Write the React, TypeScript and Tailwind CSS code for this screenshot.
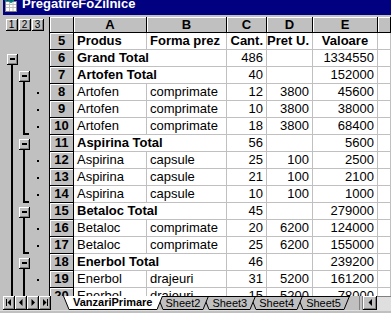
import React from 'react';

type Kind = 'head' | 'total' | 'data';
type Row = { n: number; kind: Kind; a: string; b?: string; c?: string; d?: string; e?: string };

const rows: Row[] = [
  { n: 5, kind: 'head', a: 'Produs', b: 'Forma prez', c: 'Cant.', d: 'Pret U.', e: 'Valoare' },
  { n: 6, kind: 'total', a: 'Grand Total', c: '486', e: '1334550' },
  { n: 7, kind: 'total', a: 'Artofen Total', c: '40', e: '152000' },
  { n: 8, kind: 'data', a: 'Artofen', b: 'comprimate', c: '12', d: '3800', e: '45600' },
  { n: 9, kind: 'data', a: 'Artofen', b: 'comprimate', c: '10', d: '3800', e: '38000' },
  { n: 10, kind: 'data', a: 'Artofen', b: 'comprimate', c: '18', d: '3800', e: '68400' },
  { n: 11, kind: 'total', a: 'Aspirina Total', c: '56', e: '5600' },
  { n: 12, kind: 'data', a: 'Aspirina', b: 'capsule', c: '25', d: '100', e: '2500' },
  { n: 13, kind: 'data', a: 'Aspirina', b: 'capsule', c: '21', d: '100', e: '2100' },
  { n: 14, kind: 'data', a: 'Aspirina', b: 'capsule', c: '10', d: '100', e: '1000' },
  { n: 15, kind: 'total', a: 'Betaloc Total', c: '45', e: '279000' },
  { n: 16, kind: 'data', a: 'Betaloc', b: 'comprimate', c: '20', d: '6200', e: '124000' },
  { n: 17, kind: 'data', a: 'Betaloc', b: 'comprimate', c: '25', d: '6200', e: '155000' },
  { n: 18, kind: 'total', a: 'Enerbol Total', c: '46', e: '239200' },
  { n: 19, kind: 'data', a: 'Enerbol', b: 'drajeuri', c: '31', d: '5200', e: '161200' },
  { n: 20, kind: 'data', a: 'Enerbol', b: 'drajeuri', c: '15', d: '5200', e: '78000' },
];

const ROW = 17;

// raised outline "-" button, drawn at row index i
function MinusBox({ x, i }: { x: number; i: number }) {
  const y = i * ROW + 4;
  return (
    <g>
      <rect x={x} y={y} width={11} height={11} fill="#c0c0c0" />
      <rect x={x} y={y} width={10} height={1} fill="#fff" />
      <rect x={x} y={y} width={1} height={10} fill="#fff" />
      <rect x={x} y={y + 10} width={11} height={1} fill="#000" />
      <rect x={x + 10} y={y} width={1} height={11} fill="#000" />
      <rect x={x + 1} y={y + 9} width={9} height={1} fill="#808080" />
      <rect x={x + 9} y={y + 1} width={1} height={9} fill="#808080" />
      <rect x={x + 3} y={y + 4} width={5} height={2} fill="#000" />
    </g>
  );
}

function Bracket({ from, to, hook }: { from: number; to: number; hook: boolean }) {
  const y0 = from * ROW + 15;
  const y1 = hook ? to * ROW + 17 : 263;
  return (
    <g fill="#000">
      <rect x={20} y={y0} width={2} height={y1 - y0} />
      {hook && <rect x={20} y={to * ROW + 15} width={6} height={2} />}
    </g>
  );
}

function OutlineGutter() {
  const dots = [3, 4, 5, 7, 8, 9, 11, 12, 14, 15];
  return (
    <svg width={46} height={263} className="shrink-0">
      <rect x={8} y={ROW + 15} width={2} height={263} fill="#000" />
      <MinusBox x={4} i={1} />
      <Bracket from={2} to={5} hook />
      <Bracket from={6} to={9} hook />
      <Bracket from={10} to={12} hook />
      <Bracket from={13} to={15} hook={false} />
      {[2, 6, 10, 13].map((i) => (
        <MinusBox key={i} x={16} i={i} />
      ))}
      {dots.map((i) => (
        <rect key={i} x={34} y={i * ROW + 8} width={2} height={2} fill="#000" />
      ))}
    </svg>
  );
}

function SheetRow({ r }: { r: Row }) {
  const cell = 'h-[17px] shrink-0 border-r border-b border-[#c0c0c0] bg-white px-[3px] flex items-center whitespace-nowrap overflow-hidden';
  const num = 'justify-end';
  const head = r.kind === 'head' ? 'font-bold' : '';
  return (
    <div className={`flex h-[17px] text-[13px] leading-[16px] text-black ${head}`}>
      <div className="w-[25px] h-[17px] shrink-0 border-l border-r border-b border-black bg-[#c0c0c0] shadow-[inset_1px_1px_0_#fff] flex items-center justify-center font-bold">
        {r.n}
      </div>
      {r.kind === 'total' ? (
        <div className={`${cell} w-[153px] font-bold`}>{r.a}</div>
      ) : (
        <>
          <div className={`${cell} w-[73px]`}>{r.a}</div>
          <div className={`${cell} w-[80px]`}>{r.b}</div>
        </>
      )}
      <div className={`${cell} w-[40px] ${num}`}>{r.c}</div>
      <div className={`${cell} w-[46px] ${num}`}>{r.d}</div>
      <div className={`${cell} w-[65px] ${r.kind === 'head' ? 'justify-center' : num}`}>{r.e}</div>
      <div className={`${cell} flex-1`} />
    </div>
  );
}

function ColHead({ label, w }: { label: string; w: string }) {
  return (
    <div className={`${w} h-[16px] shrink-0 bg-[#c0c0c0] border-r border-b border-black shadow-[inset_1px_1px_0_#fff] flex items-center justify-center text-[13px] font-bold leading-none`}>
      {label}
    </div>
  );
}

function LevelButton({ n }: { n: number }) {
  return (
    <div className="w-[12px] h-[12px] bg-[#c0c0c0] border-r border-b border-black shadow-[inset_1px_1px_0_#fff,inset_-1px_-1px_0_#808080] flex items-center justify-center text-[10px] leading-none">
      {n}
    </div>
  );
}

function NavButton({ dir }: { dir: 'first' | 'prev' | 'next' | 'last' }) {
  return (
    <div className="w-[12px] h-[14px] shrink-0 bg-[#c0c0c0] border-r border-b border-black shadow-[inset_1px_1px_0_#fff,inset_-1px_-1px_0_#808080] flex items-center justify-center">
      <svg width={8} height={7} fill="#000">
        {dir === 'first' && (
          <>
            <rect x={1} y={0} width={1} height={7} />
            <polygon points="6,0 6,7 2.5,3.5" />
          </>
        )}
        {dir === 'prev' && <polygon points="5.5,0 5.5,7 2,3.5" />}
        {dir === 'next' && <polygon points="2.5,0 2.5,7 6,3.5" />}
        {dir === 'last' && (
          <>
            <polygon points="2,0 2,7 5.5,3.5" />
            <rect x={6} y={0} width={1} height={7} />
          </>
        )}
      </svg>
    </div>
  );
}

const tabs = ['VanzariPrimare', 'Sheet2', 'Sheet3', 'Sheet4', 'Sheet5'];
const tabZ = ['z-[5]', 'z-[4]', 'z-[3]', 'z-[2]', 'z-[1]'];

// sheet tab: slanted sides drawn as two small svgs around the label
function SheetTab({ label, i }: { label: string; i: number }) {
  const active = i === 0;
  const fill = active ? '#fff' : '#c0c0c0';
  return (
    <div className={`relative flex h-[14px] shrink-0 ${tabZ[i]} ${i > 0 ? '-ml-[6px]' : ''}`}>
      <svg width={6} height={14} className="shrink-0">
        <polygon points="0.5,0 6,13 6,0" fill={fill} />
        {!active && <line x1={0} y1={0.5} x2={6} y2={0.5} stroke="#000" />}
        <line x1={0.5} y1={0} x2={6} y2={13.5} stroke="#000" />
      </svg>
      <div
        className={`h-[14px] flex items-center border-b border-black text-[11px] leading-none text-black ${
          active ? 'bg-white font-bold px-[4px]' : 'bg-[#c0c0c0] border-t px-[3px]'
        }`}
      >
        {label}
      </div>
      <svg width={6} height={14} className="shrink-0">
        <polygon points="0,0 5.5,0 0,13" fill={fill} />
        {!active && <line x1={0} y1={0.5} x2={6} y2={0.5} stroke="#000" />}
        <line x1={5.5} y1={0} x2={0} y2={13.5} stroke="#000" />
      </svg>
    </div>
  );
}

function TitleIcon() {
  return (
    <svg width={14} height={14} className="shrink-0 ml-[1px] -mt-[2px]">
      <rect x={1.5} y={3.5} width={11} height={10} fill="#fff" stroke="#808080" />
      <path d="M2 6.5h10M2 9.5h10M5.5 4v9M9 4v9" stroke="#c0c0c0" />
      <path d="M1 3l3-2 3 3 4-3" stroke="#008080" strokeWidth={2} fill="none" />
      <rect x={10} y={0} width={3} height={3} fill="#000080" />
    </svg>
  );
}

export default function App() {
  return (
    <div className="w-[391px] h-[313px] overflow-hidden bg-[#c0c0c0] flex flex-col font-['Liberation_Sans',Arial,sans-serif]">
      <div className="h-[15px] ml-[3px] shrink-0 bg-[#000080] flex items-start overflow-hidden">
        <TitleIcon />
        <span className="ml-[4px] -mt-[3px] text-[13px] leading-[13px] font-bold text-white whitespace-nowrap">
          PregatireFoZilnice
        </span>
      </div>
      <div className="h-[2px] shrink-0" />

      <div className="flex h-[16px] shrink-0 ml-[3px]">
        <div className="w-[46px] shrink-0 flex items-start gap-[1px] pt-[2px] pl-[3px]">
          <LevelButton n={1} />
          <LevelButton n={2} />
          <LevelButton n={3} />
        </div>
        <div className="w-[25px] h-[16px] shrink-0 bg-[#c0c0c0] border-l border-r border-b border-black shadow-[inset_1px_1px_0_#fff]" />
        <ColHead label="A" w="w-[73px]" />
        <ColHead label="B" w="w-[80px]" />
        <ColHead label="C" w="w-[40px]" />
        <ColHead label="D" w="w-[46px]" />
        <ColHead label="E" w="w-[65px]" />
        <ColHead label="" w="flex-1" />
      </div>

      <div className="flex h-[263px] shrink-0 ml-[3px] overflow-hidden">
        <OutlineGutter />
        <div className="flex-1 flex flex-col">
          {rows.map((r) => (
            <SheetRow key={r.n} r={r} />
          ))}
        </div>
      </div>

      <div className="flex h-[14px] shrink-0 ml-[3px] items-start">
        <NavButton dir="first" />
        <NavButton dir="prev" />
        <NavButton dir="next" />
        <NavButton dir="last" />
        <div className="w-[12px] shrink-0" />
        <div className="flex">
          {tabs.map((t, i) => (
            <SheetTab key={t} label={t} i={i} />
          ))}
        </div>
        <div className="flex-1" />
        <div className="w-[4px] h-[14px] shrink-0 border-l border-r border-[#808080] bg-[#c0c0c0]" />
        <div className="w-[14px] h-[14px] shrink-0 bg-[#c0c0c0] border-r border-b border-black shadow-[inset_1px_1px_0_#fff,inset_-1px_-1px_0_#808080] flex items-center justify-center">
          <svg width={6} height={7} fill="#000">
            <polygon points="5,0 5,7 1.5,3.5" />
          </svg>
        </div>
        <div className="w-[14px] h-[14px] shrink-0 bg-[#dfdfdf] border-t border-[#808080]" />
      </div>
      <div className="h-[3px] shrink-0 border-t border-[#dfdfdf]" />
    </div>
  );
}
